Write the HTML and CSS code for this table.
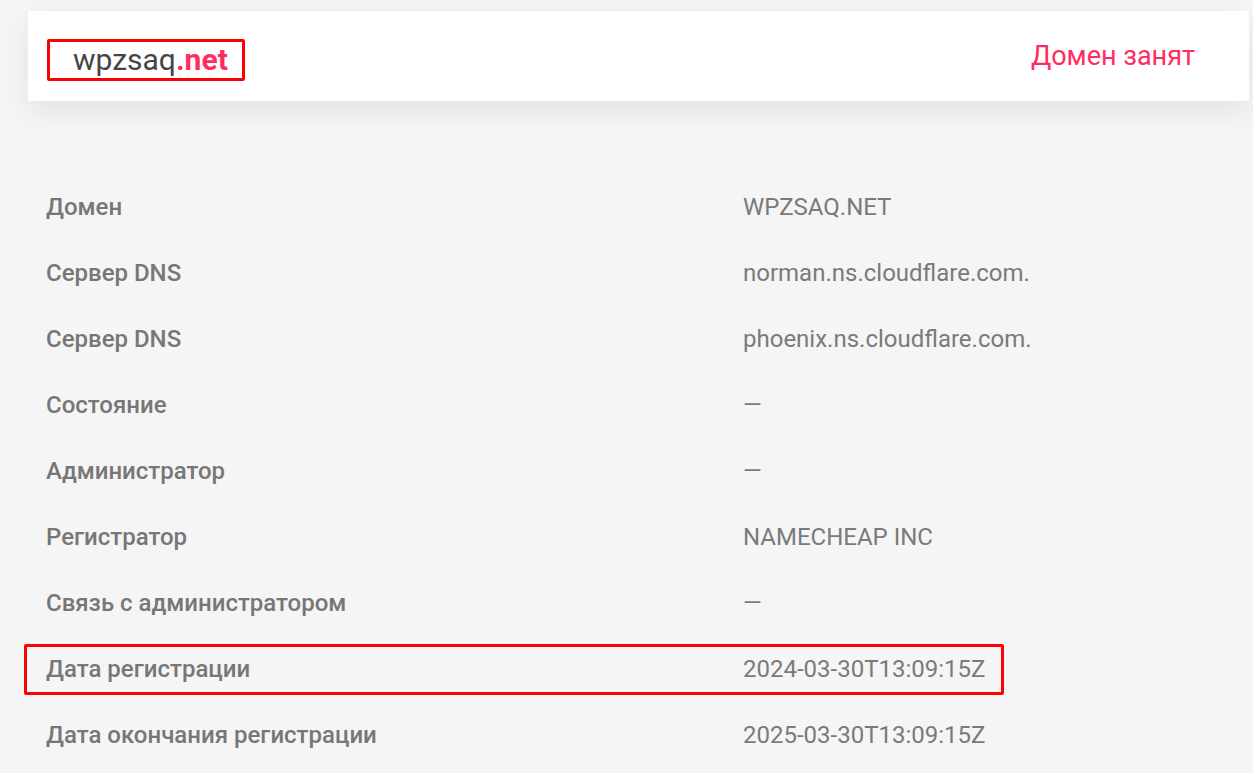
FILE: index.html
```html
<!DOCTYPE html>
<html lang="ru">
<head>
<meta charset="utf-8">
<title>wpzsaq.net</title>
<link rel="stylesheet" href="styles.css">
</head>
<body>
<div class="page">
  <header class="card">
    <div class="domain-box"><span class="name">wpzsaq</span><span class="tld">.net</span></div>
    <div class="status">Домен занят</div>
  </header>
  <div class="info">
    <div class="row"><div class="label">Домен</div><div class="value">WPZSAQ.NET</div></div>
    <div class="row"><div class="label">Сервер DNS</div><div class="value">norman.ns.cloudflare.com.</div></div>
    <div class="row"><div class="label">Сервер DNS</div><div class="value">phoenix.ns.cloudflare.com.</div></div>
    <div class="row"><div class="label">Состояние</div><div class="value">—</div></div>
    <div class="row"><div class="label">Администратор</div><div class="value">—</div></div>
    <div class="row"><div class="label">Регистратор</div><div class="value">NAMECHEAP INC</div></div>
    <div class="row"><div class="label">Связь с администратором</div><div class="value">—</div></div>
    <div class="row highlighted"><span class="mark"></span><div class="label">Дата регистрации</div><div class="value">2024-03-30T13:09:15Z</div></div>
    <div class="row"><div class="label">Дата окончания регистрации</div><div class="value">2025-03-30T13:09:15Z</div></div>
  </div>
</div>
</body>
</html>
```

FILE: styles.css
```css
html, body {
  margin: 0;
  padding: 0;
  background: #f5f5f5;
  font-family: Roboto, "Noto Sans", "Liberation Sans", sans-serif;
  overflow: hidden;
}
.page {
  padding: 11px 4px 0 28px;
}
.card {
  height: 90px;
  background: #fff;
  display: flex;
  align-items: center;
  justify-content: space-between;
  padding: 0 54px 0 19px;
  box-shadow: 0 10px 30px rgba(0, 0, 0, 0.08);
}
.domain-box {
  box-sizing: border-box;
  height: 42px;
  width: 198px;
  border: 3px solid #ff0000;
  border-radius: 2px;
  padding-left: 23px;
  display: flex;
  align-items: center;
  font-size: 30px;
  line-height: 1;
  margin-top: 8px;
}
.name { color: #454545; }
.tld { color: #ff2d5f; font-weight: 700; }
.status {
  color: #ff2d5f;
  font-size: 27px;
}
.info {
  padding: 73px 0 0 18px;
}
.row {
  position: relative;
  height: 66px;
  display: flex;
  align-items: center;
  font-size: 24px;
  color: #777;
}
.label {
  width: 697px;
  font-weight: 500;
}
.value {
  color: #7a7a7a;
}
.mark {
  position: absolute;
  left: -22px;
  top: 8px;
  width: 980px;
  height: 51px;
  box-sizing: border-box;
  border: 3px solid #ff0000;
  border-radius: 2px;
}
```
